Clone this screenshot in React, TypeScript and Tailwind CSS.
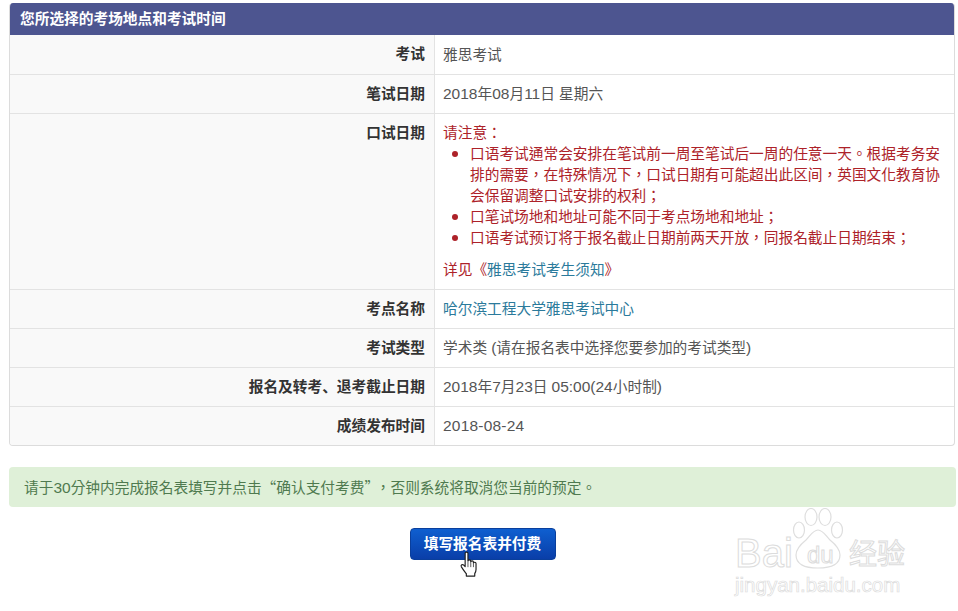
// digits and latin run wider than the CJK text in the reference
const L = ({ children }: { children: React.ReactNode }) => (
  <span className="font-['Liberation_Sans',sans-serif] text-[15.5px]">{children}</span>
);

const rows = [
  { label: '考试', value: <span className="pt-px">雅思考试</span> },
  {
    label: '笔试日期',
    value: (
      <span>
        <L>2018</L>年<L>08</L>月<L>11</L>日 星期六
      </span>
    ),
  },
];

const rowsAfter = [
  { label: '考点名称', value: <a className="text-[#2b7a9b]">哈尔滨工程大学雅思考试中心</a> },
  {
    label: '考试类型',
    value: (
      <span>
        学术类 <L>(</L>请在报名表中选择您要参加的考试类型<L>)</L>
      </span>
    ),
  },
  {
    label: '报名及转考、退考截止日期',
    value: (
      <span>
        <L>2018</L>年<L>7</L>月<L>23</L>日 <L>05:00(24</L>小时制<L>)</L>
      </span>
    ),
  },
  { label: '成绩发布时间', value: <span className="tracking-[0.2px]"><L>2018-08-24</L></span> },
];

const Row = ({ label, children, size = 'h-[39px]', last = false }: { label: string; children: React.ReactNode; size?: string; last?: boolean }) => (
  <div className={`flex ${size} ${last ? '' : 'border-b border-[#e3e3e3]'}`}>
    <div className="flex w-[425px] shrink-0 items-center justify-end border-r border-[#e3e3e3] bg-[#f9f9f9] pr-[9px] font-bold leading-[19px] text-[#333]">
      {label}
    </div>
    <div className="flex flex-1 items-center pl-[8px] pr-2 leading-[19px] text-[#555]">{children}</div>
  </div>
);

const HandCursor = () => (
  <svg width="22" height="28" viewBox="0 0 20 26" className="absolute left-[49px] top-[23px]">
    <path
      d="M5.5 2.2c0-1.6 2.6-1.6 2.6 0v7.2c.2-1.5 2.5-1.4 2.6.1v.6c.3-1.3 2.4-1.2 2.5.2v.8c.4-1 2.3-.9 2.4.5v5.6c0 1.6-.5 2.6-1.2 3.8v2.3H6.6v-2.2c-1.2-1.6-3-3.8-4.6-6.4-.9-1.6 1-2.8 2.2-1.6l1.3 1.4z"
      fill="#fff"
      stroke="#222"
      strokeWidth="1.1"
      strokeLinejoin="round"
    />
    <path d="M8.1 10v5M10.7 10.5V15M13.2 11.3V15" stroke="#444" strokeWidth="0.8" />
  </svg>
);

const Watermark = () => (
  <div className="absolute left-[735px] top-[508px] h-[92px] w-[172px] font-['Liberation_Sans',sans-serif]">
    <svg width="54" height="62" viewBox="0 0 54 62" className="absolute left-[56px] top-0" fill="#fff" stroke="#dedede" strokeWidth="1.2">
      <ellipse cx="8" cy="22" rx="5.5" ry="8" />
      <ellipse cx="20" cy="9" rx="6" ry="8.5" />
      <ellipse cx="34" cy="9" rx="6" ry="8.5" />
      <ellipse cx="46" cy="22" rx="5.5" ry="8" />
      <path d="M27 22c5 0 8 6 12 10 5 4 10 9 10 15 0 9-8 13-22 13S5 56 5 47c0-6 5-11 10-15 4-4 7-10 12-10z" />
    </svg>
    <span className="absolute left-0 top-[23px] text-[40px] leading-[44px] text-transparent [-webkit-text-stroke:1px_#dcdcdc]">Bai</span>
    <span className="absolute left-[72px] top-[33px] text-[24px] leading-[28px] text-transparent [-webkit-text-stroke:1px_#dcdcdc]">du</span>
    <span className="absolute left-[114px] top-[24px] whitespace-nowrap font-['Noto_Sans_CJK_SC',sans-serif] text-[28px] leading-[40px] text-transparent [-webkit-text-stroke:1px_#dcdcdc]">经验</span>
    <span className="absolute left-0 top-[64px] whitespace-nowrap text-[20.5px] leading-[26px] text-transparent [-webkit-text-stroke:0.7px_#dcdcdc]">jingyan.baidu.com</span>
  </div>
);

export default function App() {
  return (
    <div className="relative h-[611px] w-[958px] overflow-hidden bg-white pl-[9px] pr-[2px] pt-[3px] font-['Liberation_Sans','Noto_Sans_CJK_SC',sans-serif] text-[14.7px]">
      <div className="w-[946px] overflow-hidden rounded-[4px] border border-t-0 border-[#dcdcdc]">
        <div className="-mx-px h-[32px] bg-[#4d5590] pl-[11px] pt-[7px] font-bold leading-[18px] text-white">
          您所选择的考场地点和考试时间
        </div>
        {rows.map((r, i) => (
          <Row key={r.label} label={r.label} size={i === 0 ? 'h-[40px]' : 'h-[39px]'}>
            {r.value}
          </Row>
        ))}
        <div className="flex h-[176px] border-b border-[#e3e3e3]">
          <div className="w-[425px] shrink-0 border-r border-[#e3e3e3] bg-[#f9f9f9] pr-[9px] pt-[10px] text-right font-bold leading-[19px] text-[#333]">
            口试日期
          </div>
          <div className="flex-1 pl-[8px] pr-2 pt-[7px] font-['Noto_Sans_CJK_TC',sans-serif] leading-[21px] text-[#ad2229]">
            <p className="h-[21px]">请注意：</p>
            <ul className="list-disc pl-[27px]">
              <li>口语考试通常会安排在笔试前一周至笔试后一周的任意一天。根据考务安排的需要，在特殊情况下，口试日期有可能超出此区间，英国文化教育协会保留调整口试安排的权利；</li>
              <li>口笔试场地和地址可能不同于考点场地和地址；</li>
              <li>口语考试预订将于报名截止日期前两天开放，同报名截止日期结束；</li>
            </ul>
            <p className="mt-[11px]">
              详见《<a className="text-[#2b7a9b]">雅思考试考生须知</a>》
            </p>
          </div>
        </div>
        {rowsAfter.map((r, i) => {
          const last = i === rowsAfter.length - 1;
          return (
            <Row key={r.label} label={r.label} last={last} size={last ? 'h-[38px]' : 'h-[39px]'}>
              {r.value}
            </Row>
          );
        })}
      </div>

      <div className="mt-[21px] h-[40px] w-[947px] rounded-[4px] bg-[#dff0d8] pl-[15px] font-['Noto_Sans_CJK_TC',sans-serif] leading-[40px] text-[#4f7a4f]">
        请于<L>30</L>分钟内完成报名表填写并点击<span className="font-['Noto_Sans_CJK_SC',sans-serif]">“</span>确认支付考费<span className="font-['Noto_Sans_CJK_SC',sans-serif]">”</span><span className="ml-1">，</span>否则系统将取消您当前的预定。
      </div>

      <div className="mt-[21px] flex justify-center">
        <div className="relative">
          <button className="h-[32px] w-[146px] rounded-[4px] border border-[#0a3f9c] bg-gradient-to-b from-[#0f5fd0] to-[#0a3ea8] font-bold text-white">
            填写报名表并付费
          </button>
          <HandCursor />
        </div>
      </div>

      <Watermark />
    </div>
  );
}
